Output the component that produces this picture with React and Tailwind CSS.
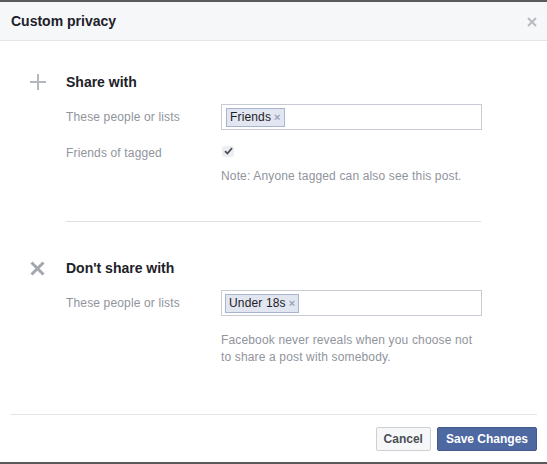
import React from "react";

function PlusIcon() {
  return (
    <svg width="16" height="16" viewBox="0 0 16 16">
      <rect x="7" y="0" width="2" height="16" fill="#b4b7bd" />
      <rect x="0" y="7" width="16" height="2" fill="#b4b7bd" />
    </svg>
  );
}

function XIcon() {
  return (
    <svg width="15" height="15" viewBox="0 0 15 15">
      <path d="M1.5 1.5 L13.5 13.5 M13.5 1.5 L1.5 13.5" stroke="#a3a7ae" strokeWidth="3" />
    </svg>
  );
}

function Token({ label }) {
  return (
    <span className="inline-flex items-center h-[19px] pl-[3px] pr-[3px] bg-[#e2e6f0] border border-[#a8b5d0] text-[12px] text-[#1d2129] leading-none tracking-[0.15px]">
      {label}
      <span className="ml-[3px] text-[#97a3bd] text-[11px] font-bold">×</span>
    </span>
  );
}

function Section({ icon, title, children }) {
  return (
    <div>
      <div className="flex items-center h-[24px]">
        <div className="w-[66px] pl-[30px] flex items-center">{icon}</div>
        <div className="text-[14px] font-bold text-[#1d2129]">{title}</div>
      </div>
      {children}
    </div>
  );
}

export default function App() {
  return (
    <div
      className="w-[547px] h-[464px] bg-white border-t-2 border-b-2 border-[#5a5a5a] flex flex-col"
      style={{ fontFamily: '"Liberation Sans", Arial, sans-serif' }}
    >
      <div className="h-[39px] shrink-0 bg-[#f6f7f9] border-b border-[#e5e5e5] flex items-center justify-between pl-[11px] pr-[10px]">
        <div className="text-[14px] font-bold text-[#1d2129] pt-[1px]">Custom privacy</div>
        <svg width="10" height="10" viewBox="0 0 10 10" className="mt-[2px]">
          <path d="M1 1 L9 9 M9 1 L1 9" stroke="#b8bcc2" strokeWidth="2" />
        </svg>
      </div>

      <div className="flex-1 flex flex-col">
        <div className="mt-[29px]">
          <Section icon={<PlusIcon />} title="Share with">
            <div className="flex items-center mt-[10px] h-[26px]">
              <div className="w-[66px]" />
              <div className="w-[155px] text-[12px] text-[#90949c] tracking-[0.15px]">These people or lists</div>
              <div className="w-[261px] h-[26px] border border-[#c6cbd4] flex items-center pl-[4px]">
                <Token label="Friends" />
              </div>
            </div>
            <div className="flex items-center mt-[14px] h-[14px]">
              <div className="w-[66px]" />
              <div className="w-[155px] text-[12px] text-[#90949c] pt-[3px] tracking-[0.15px]">Friends of tagged</div>
              <div className="w-[12px] h-[11px] bg-[#eceef1] rounded-[2px] flex items-center justify-center ml-[1px]">
                <svg width="9" height="8" viewBox="0 0 9 8">
                  <path d="M1 4.2 L3.4 6.5 L8 1.2" stroke="#4b4f56" strokeWidth="1.8" fill="none" />
                </svg>
              </div>
            </div>
            <div className="flex mt-[10px]">
              <div className="w-[221px]" />
              <div className="text-[12px] text-[#90949c] leading-[17px] tracking-[0.15px]">Note: Anyone tagged can also see this post.</div>
            </div>
          </Section>
        </div>

        <div className="ml-[66px] w-[415px] h-px bg-[#dddfe2] mt-[36px]" />

        <div className="mt-[34px]">
          <Section icon={<XIcon />} title="Don't share with">
            <div className="flex items-center mt-[10px] h-[26px]">
              <div className="w-[66px]" />
              <div className="w-[155px] text-[12px] text-[#90949c] tracking-[0.15px]">These people or lists</div>
              <div className="w-[261px] h-[26px] border border-[#c6cbd4] flex items-center pl-[3px]">
                <Token label="Under 18s" />
              </div>
            </div>
            <div className="flex mt-[16px]">
              <div className="w-[221px]" />
              <div className="w-[256px] text-[12px] text-[#90949c] leading-[17px] tracking-[0.15px]">
                Facebook never reveals when you choose not to share a post with somebody.
              </div>
            </div>
          </Section>
        </div>

        <div className="mt-auto mx-[10px] border-t border-[#e5e5e5] flex justify-end items-center gap-[6px] h-[48px]">
          <button className="h-[24px] px-[7px] bg-[#f6f7f9] border border-[#ced0d4] rounded-[2px] text-[12px] font-bold text-[#4b4f56]">
            Cancel
          </button>
          <button className="h-[24px] px-[8px] bg-[#4e69a2] border border-[#435a8b] rounded-[2px] text-[12px] font-bold text-white">
            Save Changes
          </button>
        </div>
      </div>
    </div>
  );
}
